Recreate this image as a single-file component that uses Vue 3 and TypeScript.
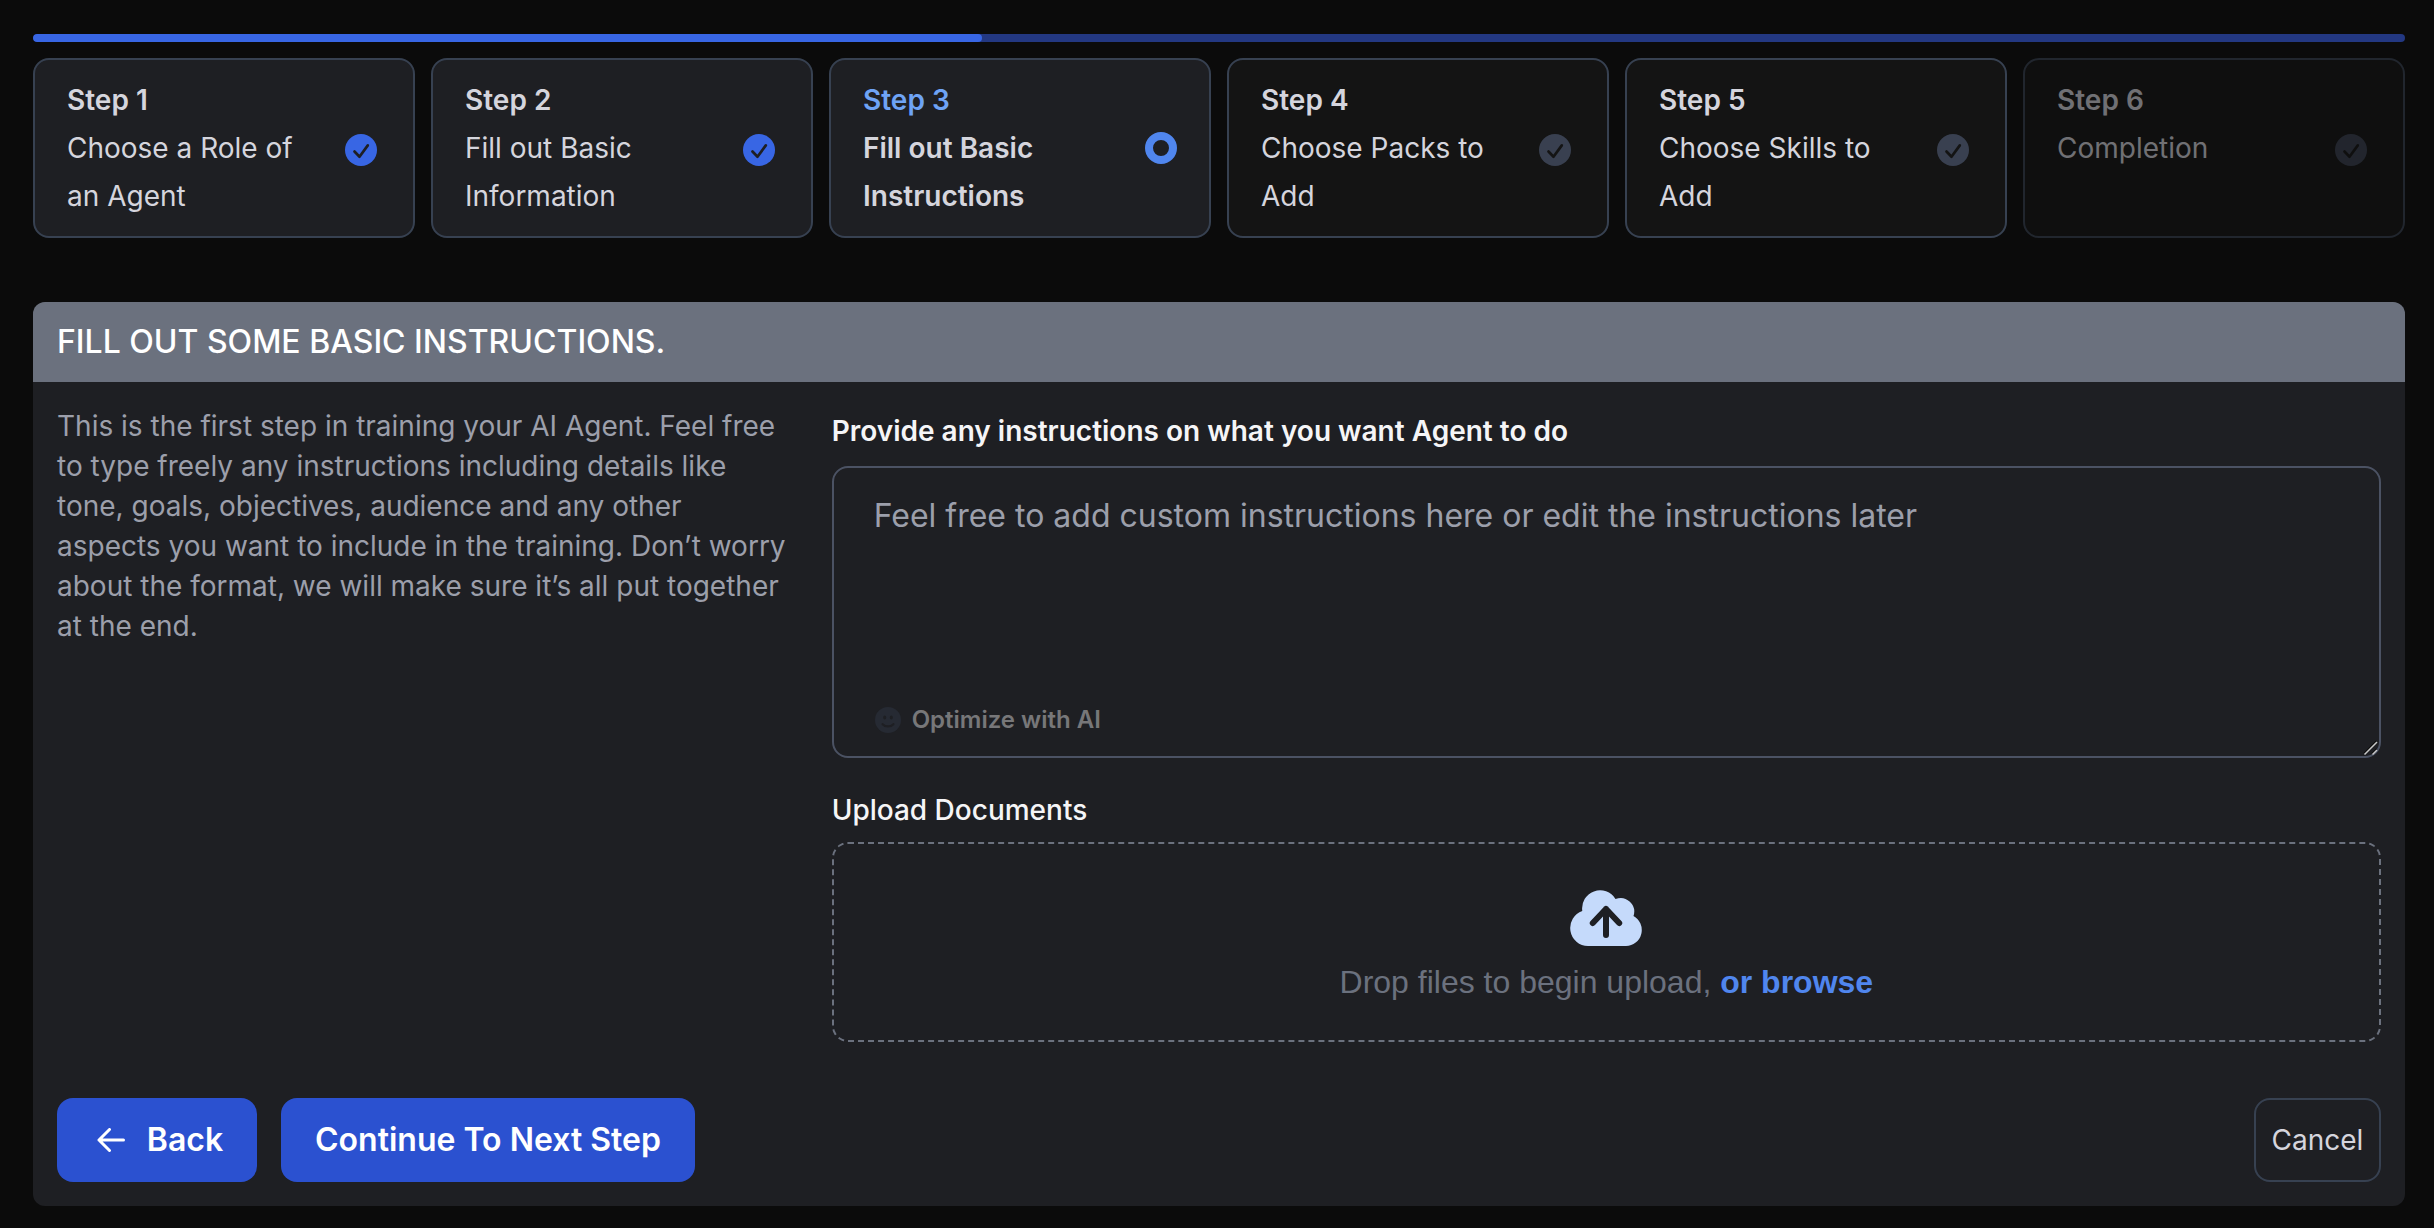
<script setup lang="ts">
import { ref } from 'vue'

type StepState = 'done' | 'current' | 'todo' | 'locked'

interface Step {
  id: number
  label: string
  state: StepState
}

const steps: Step[] = [
  { id: 1, label: 'Choose a Role of an Agent', state: 'done' },
  { id: 2, label: 'Fill out Basic Information', state: 'done' },
  { id: 3, label: 'Fill out Basic Instructions', state: 'current' },
  { id: 4, label: 'Choose Packs to Add', state: 'todo' },
  { id: 5, label: 'Choose Skills to Add', state: 'todo' },
  { id: 6, label: 'Completion', state: 'locked' },
]

const progress = 40
const instructions = ref('')
</script>

<template>
  <main class="page">
    <div class="progress">
      <div class="progress-fill" :style="{ width: progress + '%' }"></div>
    </div>

    <ol class="steps">
      <li v-for="step in steps" :key="step.id" class="step" :class="step.state">
        <div class="step-text">
          <div class="step-title">Step {{ step.id }}</div>
          <div class="step-label">{{ step.label }}</div>
        </div>
        <span v-if="step.state === 'current'" class="ring"></span>
        <svg v-else class="check" viewBox="0 0 32 32">
          <circle cx="16" cy="16" r="16" />
          <path d="M9.5 17.5l5 5.2L22.8 11.4" />
        </svg>
      </li>
    </ol>

    <section class="panel">
      <h1 class="panel-title">FILL OUT SOME BASIC INSTRUCTIONS.</h1>
      <div class="panel-body">
        <p class="intro">
          This is the first step in training your AI Agent. Feel free to type freely any instructions
          including details like tone, goals, objectives, audience and any other aspects you want to
          include in the training. Don’t worry about the format, we will make sure it’s all put
          together at the end.
        </p>
        <div class="form">
          <label class="label strong" for="instructions">Provide any instructions on what you want Agent to do</label>
          <div class="editor">
            <textarea
              id="instructions"
              v-model="instructions"
              class="input"
              placeholder="Feel free to add custom instructions here or edit the instructions later"
            ></textarea>
            <div class="optimize">
              <svg class="smile" viewBox="0 0 26 26">
                <circle cx="13" cy="13" r="13" />
                <ellipse class="eye" cx="9.7" cy="10.6" rx="1.5" ry="2" />
                <ellipse class="eye" cx="16.3" cy="10.6" rx="1.5" ry="2" />
                <path d="M7.6 17.2c2.6 3 8.2 3 10.8 0" />
              </svg>
              <span>Optimize with AI</span>
            </div>
            <svg class="grip" viewBox="0 0 16 16">
              <path class="shade" d="M1 13.5L13.5 1M9 13.8L13.8 9" />
              <path d="M1.5 14.5L14 2M9.5 14.5L14 10" />
            </svg>
          </div>

          <div class="label upload-label">Upload Documents</div>
          <div class="dropzone">
            <svg class="cloud" viewBox="0 0 72 56">
              <path
                d="M18 56A18 18 0 0 1 12.300 21A18 18 0 0 1 45.500 9A13.700 13.700 0 0 1 63.500 26A16 16 0 0 1 56 56Z"
              />
              <path class="arrow" d="M36 45V19M22.800 33L36 19L49.200 33" />
            </svg>
            <p class="drop-text">Drop files to begin upload, <b>or browse</b></p>
          </div>
        </div>
      </div>

      <div class="actions">
        <button class="btn back">
          <svg class="arrow-left" viewBox="0 0 28 24">
            <path d="M26.500 12H2M12.500 1.500L2 12l10.500 10.500" />
          </svg>
          <span>Back</span>
        </button>
        <button class="btn next">Continue To Next Step</button>
        <button class="cancel">Cancel</button>
      </div>
    </section>
  </main>
</template>

<style>
html,
body {
  background: #0b0b0b;
}
</style>

<style scoped>
* {
  box-sizing: border-box;
}
.page {
  min-height: 1228px;
  padding: 34px 29px 22px 33px;
  background: #0b0b0b;
  font-family: Inter, 'Liberation Sans', sans-serif;
}
.progress {
  height: 8px;
  border-radius: 4px;
  background: #233882;
  overflow: hidden;
}
.progress-fill {
  height: 100%;
  border-radius: 4px;
  background: #3866e4;
}
.steps {
  display: grid;
  grid-template-columns: repeat(6, 1fr);
  gap: 16px;
  margin: 16px 0 0;
  padding: 0;
  list-style: none;
}
.step {
  display: flex;
  align-items: center;
  justify-content: space-between;
  height: 180px;
  padding: 16px 36px 16px 32px;
  border: 2px solid #374151;
  border-radius: 16px;
  background: #1e1f23;
  color: #d5d5dd;
  font-size: 28px;
  line-height: 48px;
}
.step-text {
  width: 236px;
  height: 144px;
}
.step-title {
  font-weight: 600;
}
.current {
  padding-right: 32px;
}
.current .step-title {
  color: #6ea3f5;
}
.current .step-label {
  font-weight: 600;
}
.todo,
.locked {
  background: #141414;
}
.locked {
  opacity: 0.5;
}
.ring {
  width: 32px;
  height: 32px;
  border: 8px solid #5086ee;
  border-radius: 50%;
}
.check {
  width: 32px;
  height: 32px;
  margin-top: 4px;
  fill: #3866e4;
}
.check path {
  fill: none;
  stroke: #1e1f23;
  stroke-width: 2.7;
  stroke-linecap: round;
  stroke-linejoin: round;
}
.todo .check,
.locked .check {
  fill: #394050;
}
.todo .check path,
.locked .check path {
  stroke: #141414;
}
.panel {
  margin-top: 64px;
  height: 904px;
  border-radius: 12px;
  background: #1e1f23;
  overflow: hidden;
}
.panel-title {
  height: 80px;
  margin: 0;
  padding: 0 24px;
  background: #6b717e;
  color: #fff;
  font-size: 32px;
  font-weight: 500;
  line-height: 80px;
}
.panel-body {
  display: grid;
  grid-template-columns: 1fr 2fr;
  padding: 24px 24px 0;
}
.intro {
  margin: 0;
  padding-right: 44px;
  color: #9c9fab;
  font-size: 28px;
  line-height: 40px;
}
.label {
  display: block;
  height: 40px;
  color: #f5f5f7;
  font-size: 28px;
  font-weight: 500;
  line-height: 40px;
}
.strong {
  margin-top: 5px;
  font-weight: 600;
}
.editor {
  position: relative;
  height: 292px;
  margin-top: 15px;
}
.input {
  display: block;
  width: 100%;
  height: 100%;
  padding: 24px 40px;
  border: 2px solid #4b5263;
  border-radius: 16px;
  outline: none;
  background: transparent;
  color: #f5f5f7;
  font-family: inherit;
  font-size: 32px;
  line-height: 48px;
  resize: none;
}
.input::placeholder {
  color: #9c9fab;
  opacity: 1;
}
.optimize {
  position: absolute;
  left: 43px;
  bottom: 22px;
  display: flex;
  align-items: center;
  gap: 11px;
  color: #777779;
  font-size: 24px;
  font-weight: 600;
  line-height: 32px;
}
.smile {
  width: 26px;
  height: 26px;
  fill: #262a33;
}
.smile .eye {
  fill: #1e1f23;
}
.smile path {
  fill: none;
  stroke: #1e1f23;
  stroke-width: 2.2;
  stroke-linecap: round;
}
.grip {
  position: absolute;
  right: 2px;
  bottom: 2px;
  width: 16px;
  height: 16px;
  fill: none;
  stroke: #c8c8c8;
  stroke-width: 1.5;
}
.grip .shade {
  stroke: #0b0b0b;
}
.upload-label {
  margin-top: 32px;
}
.dropzone {
  display: flex;
  flex-direction: column;
  align-items: center;
  height: 200px;
  margin-top: 12px;
  padding-top: 46px;
  border: 2px dashed #6b717e;
  border-radius: 16px;
}
.cloud {
  width: 72px;
  height: 56px;
  fill: #c5dafb;
}
.cloud .arrow {
  fill: none;
  stroke: #1e1f23;
  stroke-width: 6;
  stroke-linecap: round;
  stroke-linejoin: round;
}
.drop-text {
  margin: 12px 0 0;
  color: #6b717e;
  font-family: 'Liberation Sans', sans-serif;
  font-size: 32px;
  line-height: 48px;
}
.drop-text b {
  color: #5086ee;
}
.actions {
  display: flex;
  align-items: center;
  gap: 24px;
  padding: 56px 24px 0;
}
.btn,
.cancel {
  display: flex;
  align-items: center;
  justify-content: center;
  height: 84px;
  padding: 0;
  border: 0;
  border-radius: 16px;
  font-family: inherit;
}
.btn {
  padding-bottom: 1px;
  background: #2b51d0;
  color: #fff;
  font-size: 32px;
  font-weight: 600;
}
.back {
  width: 200px;
  gap: 22px;
  padding-left: 6px;
}
.arrow-left {
  width: 28px;
  height: 24px;
  fill: none;
  stroke: #fff;
  stroke-width: 3;
  stroke-linecap: round;
  stroke-linejoin: round;
}
.next {
  width: 414px;
}
.cancel {
  width: 127px;
  margin-left: auto;
  border: 2px solid #374151;
  background: transparent;
  color: #d5d5dd;
  font-size: 28px;
}
</style>
